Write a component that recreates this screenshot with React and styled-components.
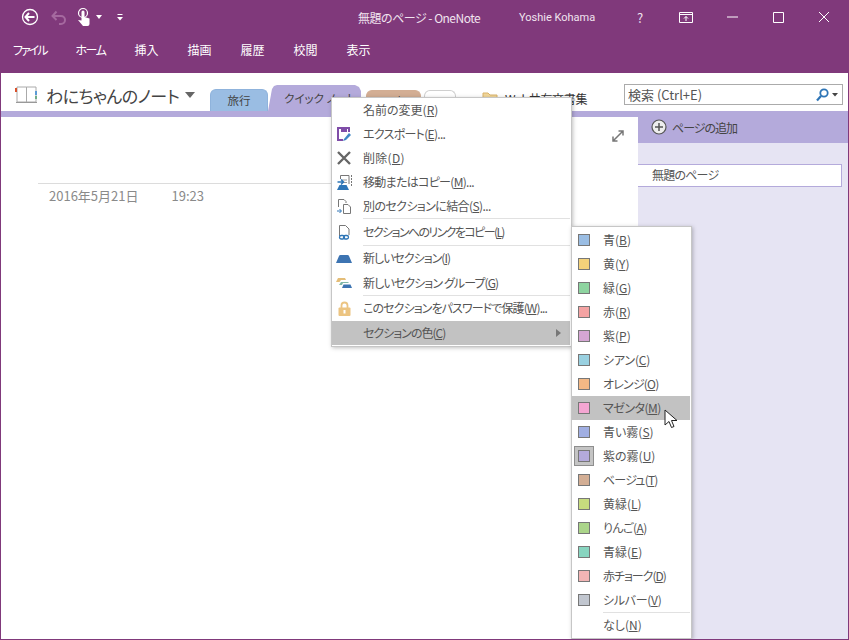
import React from "react";
import styled, { createGlobalStyle } from "styled-components";

const Global = createGlobalStyle`
  html, body { margin: 0; padding: 0; background: #fff; }
  body {
    font-family: "Noto Sans CJK JP", "Liberation Sans", sans-serif;
    font-feature-settings: "palt";
    overflow: hidden;
  }
  u { text-underline-offset: 1px; text-decoration-thickness: 1px; }
`;

const PURPLE = "#80397b";
const LILAC = "#b4aadb";

const Window = styled.div`
  position: relative;
  width: 849px;
  height: 640px;
  overflow: hidden;
  display: flex;
  flex-direction: column;
  background: #fff;
  box-sizing: border-box;
  border: solid ${PURPLE};
  border-width: 0 1px 1px 1px;
`;

const TitleBar = styled.div`
  height: 34px;
  padding-bottom: 2px;
  flex: none;
  background: ${PURPLE};
  margin: 0 -1px;
  display: flex;
  align-items: center;
  color: #f1e4ef;
`;

const Quick = styled.div`
  width: 358px;
  flex: none;
  padding-left: 21px;
  box-sizing: border-box;
  display: flex;
  align-items: center;
`;

const QuickIcon = styled.svg`
  display: block;
  flex: none;
  margin-left: ${(p) => p.$gap || 0}px;
`;

const TitleText = styled.div`
  font-size: 12px;
  letter-spacing: -0.5px;
  width: 161px;
  flex: none;
  white-space: nowrap;
`;

const UserName = styled.div`
  font-size: 11px;
  width: 98px;
  flex: none;
  font-family: "Roboto", sans-serif;
`;

const WinBtns = styled.div`
  display: flex;
  align-items: center;
`;

const WinBtn = styled.div`
  width: 46px;
  display: flex;
  justify-content: center;
  align-items: center;
  font-size: 13px;
`;

const MenuBar = styled.div`
  height: 37px;
  flex: none;
  background: ${PURPLE};
  margin: 0 -1px;
  display: flex;
  align-items: flex-start;
  padding-left: 13px;
  gap: 29px;
  color: #fff;
  font-size: 12px;
  line-height: 28px;
`;

const MenuTab = styled.span`
  letter-spacing: ${(p) => p.$ls || 0}px;
`;

const SectionBar = styled.div`
  height: 38px;
  flex: none;
  display: flex;
  align-items: flex-end;
  background: #fff;
`;

const Notebook = styled.div`
  width: 209px;
  flex: none;
  padding: 6px 0 0 14px;
  height: 38px;
  box-sizing: border-box;
  display: flex;
  align-items: center;
  font-size: 17px;
  letter-spacing: -0.5px;
  color: #444;
  white-space: nowrap;
`;

const NotebookIcon = styled.svg`
  flex: none;
  margin-right: 8px;
`;

const Caret = styled.span`
  display: inline-block;
  width: 0;
  height: 0;
  border: 5px solid transparent;
  border-top: 6px solid #666;
  border-bottom: 0;
  margin-left: 6px;
`;

const Tab = styled.div`
  height: ${(p) => p.$h}px;
  width: ${(p) => p.$w}px;
  margin-right: ${(p) => p.$mr || 0}px;
  flex: none;
  box-sizing: border-box;
  background: ${(p) => p.$bg};
  border: 1px solid ${(p) => p.$line || p.$bg};
  border-bottom: 0;
  border-radius: 6px 6px 0 0;
  font-size: 11.5px;
  color: #444;
  text-align: center;
  line-height: 20px;
  white-space: nowrap;
`;

const QuickTab = styled.div`
  height: 26px;
  width: 93px;
  margin-right: 5px;
  flex: none;
  box-sizing: border-box;
  background: ${LILAC};
  clip-path: polygon(0 100%, 4px 4px, 6px 1px, 9px 0, calc(100% - 6px) 0, calc(100% - 2px) 2px, 100% 6px, 100% 100%);
  font-size: 11.5px;
  color: #444;
  padding-left: 16px;
  line-height: 27px;
  white-space: nowrap;
`;

const WebLink = styled.div`
  flex: none;
  padding-left: 26px;
  height: 26px;
  display: flex;
  align-items: center;
  font-size: 12px;
  letter-spacing: -0.3px;
  color: #333;
  white-space: nowrap;
`;

const WebIcon = styled.svg`
  flex: none;
  margin-right: 7px;
`;

const Search = styled.div`
  position: absolute;
  left: 623px;
  top: 84px;
  width: 219px;
  height: 21px;
  box-sizing: border-box;
  border: 1px solid #ababab;
  background: #fff;
  font-size: 13px;
  line-height: 19px;
  padding-left: 3px;
  color: #555;
  display: flex;
  justify-content: space-between;
  align-items: center;
`;

const SearchIcons = styled.div`
  display: flex;
  align-items: center;
  gap: 3px;
  padding-right: 4px;
`;

const Body = styled.div`
  flex: 1;
  display: flex;
  min-height: 0;
`;

const NotePane = styled.div`
  flex: 1;
  border-top: 6px solid ${LILAC};
  position: relative;
  min-width: 0;
`;

const Expand = styled.svg`
  position: absolute;
  right: 14px;
  top: 13px;
`;

const NoteRule = styled.div`
  margin: 66px 0 0 37px;
  height: 1px;
  width: 300px;
  background: #dcdcdc;
`;

const NoteDate = styled.div`
  margin: 2px 0 0 48px;
  font-size: 13px;
  color: #8a8a8a;
  display: flex;
  gap: 33px;
`;

const PagePane = styled.div`
  width: 210px;
  flex: none;
  background: #e6e4f3;
  display: flex;
  flex-direction: column;
`;

const AddPage = styled.div`
  height: 32px;
  background: ${LILAC};
  display: flex;
  align-items: center;
  padding-left: 13px;
  gap: 5px;
  font-size: 12px;
  letter-spacing: -1px;
  color: #444;
`;

const PageItem = styled.div`
  margin-top: 21px;
  height: 23px;
  box-sizing: border-box;
  margin-right: 6px;
  background: #fff;
  border: 1px solid ${LILAC};
  border-left: 0;
  padding-left: 14px;
  font-size: 12px;
  letter-spacing: -0.8px;
  line-height: 19px;
  color: #555;
`;

const Menu = styled.div`
  position: absolute;
  left: ${(p) => p.$x}px;
  top: ${(p) => p.$y}px;
  width: ${(p) => p.$w}px;
  box-sizing: border-box;
  background: #fff;
  border: 1px solid #c6c6c6;
  padding: ${(p) => p.$pad};
  box-shadow: 1px 1px 4px rgba(0, 0, 0, 0.25);
`;

const Item = styled.div`
  height: ${(p) => p.$h || 24}px;
  box-sizing: border-box;
  padding-bottom: 2px;
  display: flex;
  align-items: center;
  position: relative;
  font-size: 12px;
  color: #555;
  white-space: nowrap;
  background: ${(p) => (p.$active ? "#c2c2c2" : "transparent")};
`;

const ItemText = styled.span`
  letter-spacing: ${(p) => p.$ls || 0}px;
`;

const IconSlot = styled.div`
  width: 24px;
  margin: 2px 7px 0 0;
  flex: none;
  display: flex;
  justify-content: center;
  align-items: center;
`;

const Sep = styled.div`
  height: 1px;
  background: #e1e1e1;
  margin-left: 31px;
`;

const Arrow = styled.span`
  position: absolute;
  right: 9px;
  top: 8px;
  border: 4px solid transparent;
  border-left: 5px solid #777;
  border-right: 0;
`;

const ColorFrame = styled.div`
  width: 20px;
  height: 20px;
  flex: none;
  box-sizing: border-box;
  display: flex;
  align-items: center;
  justify-content: center;
  ${(p) => p.$sel && `background: #c4c4c4; border: 1px solid #8e8e8e;`}
`;

const Swatch = styled.div`
  width: 12px;
  height: 12px;
  box-sizing: border-box;
  border: 1px solid #777;
  background: ${(p) => p.$c};
`;

const Cursor = styled.svg`
  position: absolute;
  left: 663px;
  top: 409px;
`;

const Label = ({ text, k, tail = "", ls }) => (
  <ItemText $ls={ls}>
    {text}(<u>{k}</u>){tail}
  </ItemText>
);

const ExportIcon = () => (
  <svg width="16" height="16" viewBox="0 0 16 16">
    <path d="M1 1h13v5h-2V3H3v10h4v2H1z" fill="#7f4da8" />
    <rect x="5" y="3" width="6" height="3" fill="#7f4da8" />
    <path d="M8 13l5-6 2 2-5 5-3 1z" fill="#3f86c4" />
  </svg>
);
const DeleteIcon = () => (
  <svg width="16" height="16" viewBox="0 0 16 16">
    <path d="M2 2l12 12M14 2L2 14" stroke="#666" strokeWidth="2.4" />
  </svg>
);
const MoveIcon = () => (
  <svg width="17" height="17" viewBox="0 0 17 17">
    <path d="M4.500 5V1.500h8.500V10" fill="none" stroke="#777" />
    <path d="M15.500 1v11" fill="none" stroke="#777" strokeDasharray="2 1" />
    <path d="M6 6h5M6 8.500h5" stroke="#999" />
    <path d="M1 16l2.500-5h7l2.500 5z" fill="#2e75b6" />
    <path d="M1.500 8H7M5 5.500L7.500 8 5 10.500" fill="none" stroke="#2e75b6" strokeWidth="1.500" />
  </svg>
);
const MergeIcon = () => (
  <svg width="16" height="17" viewBox="0 0 16 17">
    <path d="M2.500 9V1.500H8L10 3.500V5M7.500 15.500V6.500H12l2.500 2.500V15.500z" fill="#fff" stroke="#777" />
    <path d="M1 13h4M3.500 11l2 2-2 2" fill="none" stroke="#2e75b6" />
  </svg>
);
const LinkIcon = () => (
  <svg width="16" height="17" viewBox="0 0 16 17">
    <path d="M3.500 12V1.500H9.500L13 5v6" fill="none" stroke="#777" />
    <rect x="3.500" y="11.500" width="5" height="3.500" rx="1.700" fill="none" stroke="#2e75b6" strokeWidth="1.300" />
    <rect x="7.500" y="11.500" width="5" height="3.500" rx="1.700" fill="none" stroke="#2e75b6" strokeWidth="1.300" />
  </svg>
);
const NewSectionIcon = () => (
  <svg width="16" height="8" viewBox="0 0 16 8">
    <path d="M0 8l3-7q.3-1 1.500-1h7q1.200 0 1.500 1l3 7z" fill="#3d74b2" />
  </svg>
);
const GroupIcon = () => (
  <svg width="17" height="12" viewBox="0 0 17 12">
    <path d="M0 5l2-4h7l1 2H5L3.500 5z" fill="#e4bd78" />
    <path d="M3 8l2-3h7l1 1H7L6 8z" fill="#7fb7a8" />
    <path d="M6 11l1.500-3.500h7L16 11z" fill="#3d74b2" />
  </svg>
);
const LockIcon = () => (
  <svg width="13" height="15" viewBox="0 0 13 15">
    <path d="M3.500 7V4.500a3 3 0 0 1 6 0V7" fill="none" stroke="#ecc481" strokeWidth="1.800" />
    <rect x="0.500" y="6.500" width="12" height="8.500" rx="1" fill="#ecc481" />
    <rect x="5.500" y="9" width="2" height="3.500" fill="#fff" />
  </svg>
);

const mainItems = [
  { text: "名前の変更", k: "R" },
  { text: "エクスポート", k: "E", tail: "...", ls: -0.7, icon: <ExportIcon /> },
  { text: "削除", k: "D", ls: 0.3, icon: <DeleteIcon /> },
  { text: "移動またはコピー", k: "M", tail: "...", ls: -0.7, icon: <MoveIcon /> },
  { text: "別のセクションに結合", k: "S", tail: "...", ls: -0.6, icon: <MergeIcon /> },
  { sep: true },
  { text: "セクションへのリンクをコピー", k: "L", ls: -1.6, icon: <LinkIcon />, h: 26 },
  { sep: true },
  { text: "新しいセクション", k: "I", ls: -1, icon: <NewSectionIcon />, h: 25 },
  { text: "新しいセクション グループ", k: "G", ls: -0.9, icon: <GroupIcon /> },
  { sep: true },
  { text: "このセクションをパスワードで保護", k: "W", tail: "...", ls: -0.9, icon: <LockIcon />, h: 25 },
  { text: "セクションの色", k: "C", ls: -1, active: true, arrow: true },
];

const colors = [
  ["青", "B", "#9abde3"],
  ["黄", "Y", "#f4d27a"],
  ["緑", "G", "#8ed4a0"],
  ["赤", "R", "#f4a3a3"],
  ["紫", "P", "#d5a6d4"],
  ["シアン", "C", "#99d0e0", false, false, -0.2],
  ["オレンジ", "O", "#f3b885", false, false, -0.8],
  ["マゼンタ", "M", "#f4a6d2", true, false, -0.5],
  ["青い霧", "S", "#a0aee2"],
  ["紫の霧", "U", "#b4aadb", false, true],
  ["ベージュ", "T", "#d3ae94", false, false, -0.8],
  ["黄緑", "L", "#c7dc7e"],
  ["りんご", "A", "#abd58a", false, false, -0.6],
  ["青緑", "E", "#88d5c0"],
  ["赤チョーク", "D", "#f2b5b5", false, false, -1],
  ["シルバー", "V", "#c1c6cf", false, false, -0.3],
];

const App = () => (
  <Window>
    <Global />
    <TitleBar>
      <Quick>
        <QuickIcon width="18" height="18" viewBox="0 0 18 18">
          <circle cx="9" cy="9" r="7.500" fill="none" stroke="#fff" strokeWidth="1.300" />
          <path d="M4.500 9h9M8 5L4.500 9 8 13" fill="none" stroke="#fff" strokeWidth="2" />
        </QuickIcon>
        <QuickIcon $gap={12} width="16" height="16" viewBox="0 0 16 16">
          <path d="M2 7h8a4 4 0 0 1 0 8H8M5.500 2.500L1.500 7l4 4" fill="none" stroke="#a5699f" strokeWidth="2" />
        </QuickIcon>
        <QuickIcon $gap={9} width="16" height="20" viewBox="0 0 16 20">
          <circle cx="7" cy="6" r="4.500" fill="none" stroke="#fff" strokeWidth="1.200" />
          <path d="M5.500 5a1.500 1.500 0 0 1 3 0v5l5 1.500V17a2 2 0 0 1-2 2H7L2 13l3.500 .5z" fill="#fff" />
        </QuickIcon>
        <QuickIcon $gap={3} width="8" height="6" viewBox="0 0 8 6">
          <path d="M1 1h6L4 5z" fill="#fff" />
        </QuickIcon>
        <QuickIcon $gap={13} width="8" height="8" viewBox="0 0 8 8">
          <path d="M1.500 1.500h5" stroke="#fff" />
          <path d="M1 4h6L4 7.500z" fill="#fff" />
        </QuickIcon>
      </Quick>
      <TitleText>無題のページ - OneNote</TitleText>
      <UserName>Yoshie Kohama</UserName>
      <WinBtns>
        <WinBtn>?</WinBtn>
        <WinBtn>
          <svg width="14" height="11" viewBox="0 0 14 11">
            <path d="M.5 .5h13v10H.5zM.5 2.500h13M7 9V4.500M5 6.500l2-2 2 2" fill="none" stroke="#fff" />
          </svg>
        </WinBtn>
        <WinBtn>
          <svg width="11" height="2" viewBox="0 0 11 2"><path d="M0 1h11" stroke="#fff" /></svg>
        </WinBtn>
        <WinBtn>
          <svg width="11" height="11" viewBox="0 0 11 11"><path d="M.5 .5h10v10H.5z" fill="none" stroke="#fff" /></svg>
        </WinBtn>
        <WinBtn>
          <svg width="12" height="12" viewBox="0 0 12 12"><path d="M1 1l10 10M11 1L1 11" stroke="#fff" /></svg>
        </WinBtn>
      </WinBtns>
    </TitleBar>
    <MenuBar>
      <MenuTab $ls={-2}>ファイル</MenuTab>
      <MenuTab $ls={-1.5}>ホーム</MenuTab>
      <MenuTab>挿入</MenuTab>
      <MenuTab>描画</MenuTab>
      <MenuTab>履歴</MenuTab>
      <MenuTab>校閲</MenuTab>
      <MenuTab>表示</MenuTab>
    </MenuBar>
    <SectionBar>
      <Notebook>
        <NotebookIcon width="23" height="18" viewBox="0 0 23 18">
          <path d="M2 1h9.500v15H2zM11.500 1H21v15h-9.500z" fill="#fff" stroke="#aaa" />
          <path d="M1 16.500h21" stroke="#999" />
          <rect x="0" y="2" width="2" height="4" fill="#d9512c" />
          <rect x="20" y="5" width="2" height="4" fill="#5b9bd5" />
          <rect x="20" y="10" width="2" height="3" fill="#70ad87" />
        </NotebookIcon>
        わにちゃんのノート
        <Caret />
      </Notebook>
      <Tab $w={58} $h={22} $bg="#9abde3" $line="#8fb3dc">旅行</Tab>
      <QuickTab>クイック ノート</QuickTab>
      <Tab $w={55} $h={21} $mr={3} $bg="#d3ae94">工事</Tab>
      <Tab $w={32} $h={21} $bg="#fff" $line="#cfcfcf" />
      <WebLink>
        <WebIcon width="16" height="14" viewBox="0 0 16 14">
          <path d="M1 13V2h5l2 2h7v9z" fill="#f2d79a" stroke="#d9b36a" />
        </WebIcon>
        Web共有文書集
      </WebLink>
    </SectionBar>
    <Search>
      検索 (Ctrl+E)
      <SearchIcons>
        <svg width="13" height="14" viewBox="0 0 13 14">
          <circle cx="8" cy="5" r="3.700" fill="none" stroke="#2e75b6" strokeWidth="1.800" />
          <path d="M5 8l-4 4.500" stroke="#2e75b6" strokeWidth="2.200" />
        </svg>
        <svg width="6" height="4" viewBox="0 0 6 4"><path d="M0 0h6L3 3.500z" fill="#444" /></svg>
      </SearchIcons>
    </Search>
    <Body>
      <NotePane>
        <Expand width="12" height="12" viewBox="0 0 12 12">
          <path d="M1 11l10-10M6.500 1H11v4.500M1 6.500V11h4.500" fill="none" stroke="#777" strokeWidth="1.500" />
        </Expand>
        <NoteRule />
        <NoteDate>
          <span>2016年5月21日</span>
          <span>19:23</span>
        </NoteDate>
      </NotePane>
      <PagePane>
        <AddPage>
          <svg width="16" height="16" viewBox="0 0 16 16">
            <circle cx="8" cy="8" r="7" fill="#eee" stroke="#555" strokeWidth="1.200" />
            <path d="M8 4v8M4 8h8" stroke="#555" strokeWidth="1.500" />
          </svg>
          ページの追加
        </AddPage>
        <PageItem>無題のページ</PageItem>
      </PagePane>
    </Body>
    <Menu $x={330} $y={97} $w={241} $pad="0 1px 1px 0">
      {mainItems.map((it, i) =>
        it.sep ? (
          <Sep key={i} />
        ) : (
          <Item key={i} $active={it.active} $h={it.h}>
            <IconSlot>{it.icon}</IconSlot>
            <Label text={it.text} k={it.k} tail={it.tail} ls={it.ls} />
            {it.arrow && <Arrow />}
          </Item>
        )
      )}
    </Menu>
    <Menu $x={570} $y={226} $w={121} $pad="1px 1px 1px 0">
      {colors.map(([name, k, c, active, sel, ls]) => (
        <Item key={k} $active={active}>
          <IconSlot>
            <ColorFrame $sel={sel}>
              <Swatch $c={c} />
            </ColorFrame>
          </IconSlot>
          <Label text={name} k={k} ls={ls} />
        </Item>
      ))}
      <Sep />
      <Item>
        <IconSlot />
        <Label text="なし" k="N" />
      </Item>
    </Menu>
    <Cursor width="16" height="22" viewBox="0 0 16 22">
      <path d="M1 1v15l4-3.500 2.500 6 2.500-1-2.500-6H13z" fill="#fff" stroke="#222" />
    </Cursor>
  </Window>
);

export default App;
